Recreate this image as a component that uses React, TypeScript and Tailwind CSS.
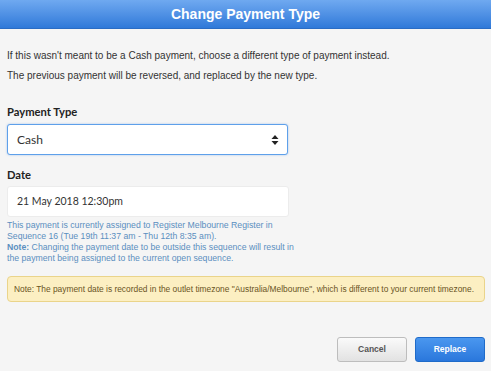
export default function App() {
  return (
    <div className="w-[491px] h-[371px] bg-[#f5f5f5] flex flex-col overflow-hidden font-['Liberation_Sans',Arial,sans-serif]">
      {/* Header */}
      <header className="h-[29px] shrink-0 bg-gradient-to-b from-[#6fa9f0] to-[#2f79d9] border-b border-[#2a6cc4] flex items-center justify-center">
        <h1 className="text-[14px] font-bold text-white leading-none">Change Payment Type</h1>
      </header>

      <main className="flex flex-col px-[7px] pt-[21px] grow">
        <p className="text-[10px] text-[#333] leading-[12px]">
          If this wasn't meant to be a Cash payment, choose a different type of payment instead.
        </p>
        <p className="text-[10px] text-[#333] leading-[12px] mt-[8px]">
          The previous payment will be reversed, and replaced by the new type.
        </p>

        {/* Payment type */}
        <label className="mt-[23px] text-[11.2px] font-bold text-[#222] leading-[14px] font-['Lato',sans-serif]">
          Payment Type
        </label>
        <div className="mt-[5px] w-[281px] h-[31px] bg-white border border-[#5ea0ea] rounded-[3px] shadow-[0_0_2px_rgba(70,140,230,0.5)] flex items-center justify-between pl-[9px] pr-[8px]">
          <span className="text-[12px] text-[#333] font-['Lato',sans-serif]">Cash</span>
          <svg width="8" height="12" viewBox="0 0 8 12" className="text-[#222]">
            <path d="M4 1 L7.5 5 L0.5 5 Z" fill="currentColor" />
            <path d="M4 11 L7.5 7 L0.5 7 Z" fill="currentColor" />
          </svg>
        </div>

        {/* Date */}
        <label className="mt-[13px] text-[11.2px] font-bold text-[#222] leading-[14px] font-['Lato',sans-serif]">
          Date
        </label>
        <div className="mt-[4px] w-[282px] h-[31px] bg-white border border-[#ececec] rounded-[3px] flex items-center pl-[9px]">
          <span className="text-[10.5px] text-[#333] font-['Lato',sans-serif]">21 May 2018 12:30pm</span>
        </div>
        <div className="mt-[3px] w-[288px] text-[8.7px] leading-[11px] text-[#5b8fc0]">
          <p>This payment is currently assigned to Register Melbourne Register in Sequence 16 (Tue 19th 11:37 am - Thu 12th 8:35 am).</p>
          <p>
            <span className="font-bold">Note:</span> Changing the payment date to be outside this sequence will result in the payment being assigned to the current open sequence.
          </p>
        </div>

        {/* Timezone note */}
        <div className="mt-[12px] w-[478px] h-[26px] shrink-0 bg-[#fcefc2] border border-[#ead48a] rounded-[4px] flex items-center pl-[6px]">
          <span className="text-[8.4px] text-[#6a5424] leading-none whitespace-nowrap">
            Note: The payment date is recorded in the outlet timezone "Australia/Melbourne", which is different to your current timezone.
          </span>
        </div>

        {/* Actions */}
        <div className="mt-auto mb-[9px] flex justify-end gap-[8px] w-[478px]">
          <button className="w-[70px] h-[25px] rounded-[3px] border border-[#bdbdbd] bg-gradient-to-b from-[#fafafa] to-[#e2e2e2] text-[8.5px] font-bold text-[#555]">
            Cancel
          </button>
          <button className="w-[70px] h-[25px] rounded-[3px] border border-[#1f6bc9] bg-gradient-to-b from-[#4a97ef] to-[#2a77dc] text-[8.5px] font-bold text-white">
            Replace
          </button>
        </div>
      </main>
    </div>
  );
}
